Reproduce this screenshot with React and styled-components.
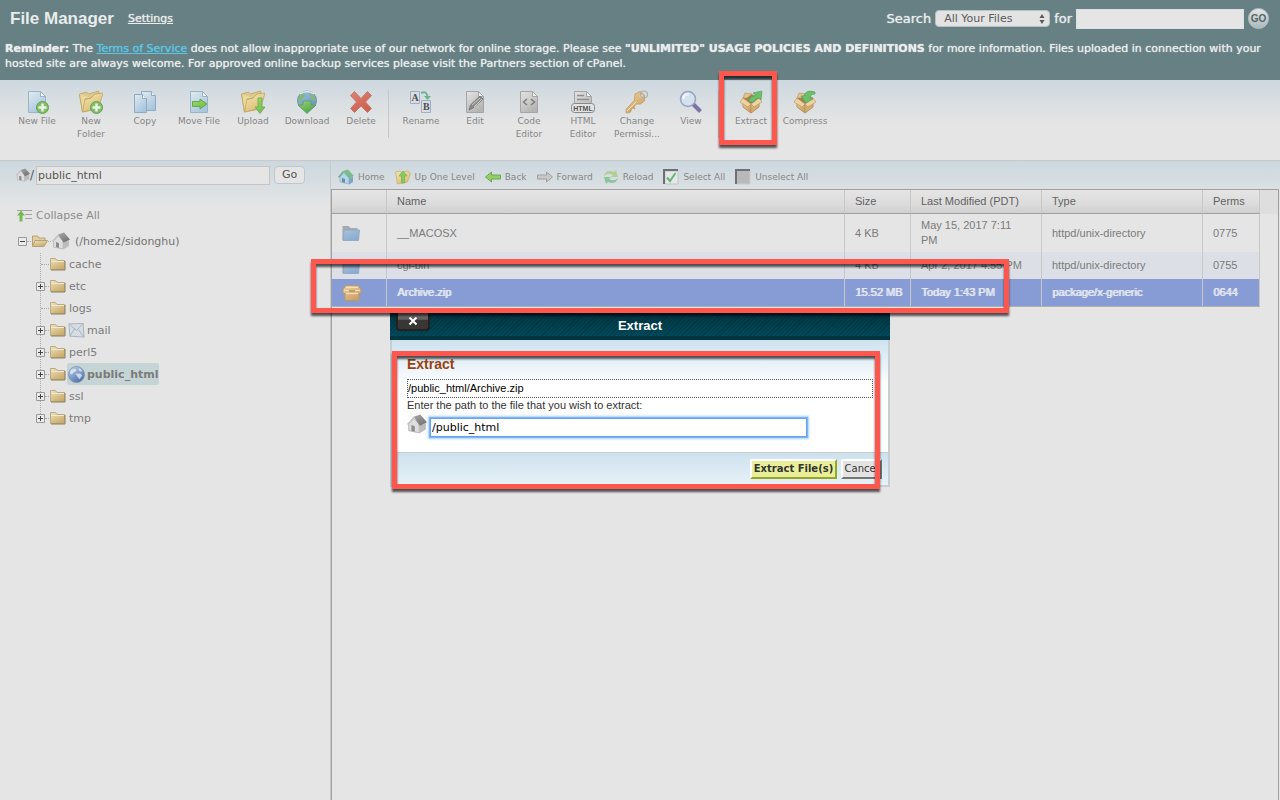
import React from 'react';
import styled, { createGlobalStyle, css } from 'styled-components';

const verdana = '"DejaVu Sans", sans-serif';
const arial = '"Liberation Sans", sans-serif';

const GlobalStyle = createGlobalStyle`
  * { box-sizing: border-box; }
  body { margin: 0; background: #e5e5e5; color: #7b7b7b; font-family: ${verdana}; overflow-x: hidden; }
  button, input, select { font-family: inherit; margin: 0; }
  svg { display: block; flex: none; }
`;

/* ---------- layout ---------- */

const Page = styled.div`
  position: relative;
  display: flex;
  flex-direction: column;
  min-height: 100vh;
`;

const Header = styled.header`
  height: 80px;
  padding-top: 8px;
  background: #678083;
  color: #e8ecec;
  overflow: hidden;
`;

const TopBar = styled.div`
  display: flex;
  align-items: center;
  height: 21px;
  padding: 0 11px 0 10px;
`;

const Title = styled.h1`
  margin: 0 14px 0 0;
  font: bold 17px/20px ${arial};
`;

const SettingsLink = styled.a`
  margin-right: auto;
  color: inherit;
  font-size: 11px;
  line-height: 20px;
  text-shadow: 0 0 1px currentColor;
`;

const SearchForm = styled.form`
  display: flex;
  align-items: center;
  gap: 4px;
  font-size: 13px;
`;

const SearchLabel = styled.label`
  text-shadow: 0 0 1px currentColor;
`;

const SelectBox = styled.span`
  display: flex;
  align-items: center;
  width: 115px;
  height: 17px;
  padding-right: 4px;
  border: 1px solid #b9c2c3;
  border-radius: 4px;
  background: #e3e3e3;
`;

const Scope = styled.select`
  flex: 1;
  min-width: 0;
  height: 15px;
  padding: 0 0 0 8px;
  border: 0;
  appearance: none;
  background: transparent;
  color: #5a5a5a;
  font-size: 11px;
`;

const SearchInput = styled.input`
  width: 168px;
  height: 20px;
  border: 1px solid #dbe2e6;
  background: #e5e5e5;
`;

const GoRound = styled.button`
  width: 21px;
  height: 21px;
  padding: 0;
  border: 1px solid #b8c4c5;
  border-radius: 50%;
  background: linear-gradient(#e3e6e6, #a9b9bc);
  color: #56666a;
  font: bold 10px/19px ${arial};
`;

const Reminder = styled.p`
  margin: 12px 0 0 5px;
  font-size: 11px;
  line-height: 15px;
  white-space: nowrap;
  text-shadow: 0 0 1px currentColor;
  a { color: #5cc5e5; }
`;

const Toolbar = styled.nav`
  display: flex;
  height: 81px;
  padding: 10px 10px 0;
  border-bottom: 1px solid #c9c9c9;
  background: linear-gradient(#cdd8df, #e5e5e5 44px);
`;

const ToolButton = styled.button`
  position: relative;
  display: flex;
  flex-direction: column;
  align-items: center;
  width: 54px;
  height: 51px;
  padding: 0;
  border: 0;
  background: none;
  color: #868686;
  font-size: 9px;
  line-height: 13px;
  > svg { margin-bottom: 1px; }
`;

const ToolDivider = styled.span`
  width: 6px;
  height: 48px;
  border-left: 1px solid #c4c8ca;
`;

const Workspace = styled.div`
  flex: 1;
  display: flex;
`;

const fade = css`background: linear-gradient(#ccd8df, #e5e5e5 46px);`;

const Sidebar = styled.aside`
  width: 331px;
  flex: none;
  border-right: 1px solid #c9c9c9;
  ${fade}
`;

const PathForm = styled.form`
  display: flex;
  align-items: center;
  height: 28px;
  padding-left: 16px;
  font-size: 12px;
  color: #555;
`;

const PathInput = styled.input`
  width: 234px;
  height: 19px;
  margin: 0 4px 0 2px;
  padding: 0 1px;
  border: 1px solid #c4c4c4;
  background: #e5e5e5;
  color: #555;
  font-size: 11px;
`;

const GoButton = styled.button`
  width: 31px;
  height: 18px;
  padding: 0;
  border: 1px solid #c0c6c9;
  border-radius: 4px;
  background: #e5e5e5;
  color: #555;
  font-size: 11px;
  line-height: 16px;
`;

const CollapseAll = styled.button`
  display: flex;
  align-items: center;
  gap: 4px;
  height: 16px;
  margin: 18px 0 0 17px;
  padding: 0;
  border: 0;
  background: none;
  color: #8c8c8c;
  font-size: 11px;
`;

const RootRow = styled.div`
  display: flex;
  align-items: center;
  height: 22px;
  margin: 7px 0 1px 18px;
  font-size: 11px;
  color: #737373;
`;

const RootName = styled.span`
  margin-left: 5px;
`;

const TreeList = styled.ul`
  margin: 0 0 0 36px;
  padding: 0;
  list-style: none;
  font-size: 11px;
  color: #7b7b7b;
  background: repeating-linear-gradient(#aaa 0 1px, transparent 1px 2px) 4px 0 / 1px 166px no-repeat;
`;

const TreeItem = styled.li`
  display: flex;
  align-items: center;
  height: 22px;
`;

const Toggle = styled.button`
  display: block;
  width: 9px;
  height: 9px;
  padding: 0;
  border: 0;
  background: #e5e5e5;
`;

const Dots = styled.span`
  width: ${p => p.$width}px;
  margin: 0 1px 0 ${p => p.$indent || 0}px;
  border-top: 1px dotted #aaa;
`;

const TreeLabel = styled.span`
  display: flex;
  align-items: center;
  gap: 2px;
  height: 22px;
  margin-left: ${p => p.$withIcon ? 1 : 2}px;
  padding: 0 1px;
  border-radius: 2px;
  ${p => p.$selected && css`background: #c5d5d5; font-weight: bold;`}
`;

const Content = styled.main`
  flex: 1;
  min-width: 0;
  display: flex;
  flex-direction: column;
  ${fade}
`;

const NavBar = styled.nav`
  display: flex;
  align-items: center;
  gap: 10px;
  height: 28px;
  padding: 4px 0 0 7px;
`;

const NavButton = styled.button`
  display: flex;
  align-items: center;
  gap: 4px;
  padding: 0;
  border: 0;
  background: none;
  color: #868686;
  font-size: 9px;
`;

const ListFrame = styled.section`
  position: relative;
  flex: 1;
  margin-right: 1px;
  border: solid #a0a0a0;
  border-width: 1px 1px 0;
  background: linear-gradient(#dedede, #dedede) 0 0 / 100% 24px no-repeat #e5e5e5;
`;

const TableArea = styled.div`
  margin-right: 18px;
`;

const Table = styled.table`
  width: 100%;
  border-collapse: separate;
  border-spacing: 0;
  border-bottom: 1px solid #b0b0b0;
  table-layout: fixed;
  text-align: left;
  font: 11px/15px ${arial};
  th, td { padding: 0 6px 0 10px; border-right: 1px solid #c8c8c8; }
  td:nth-child(4) { padding-right: 16px; }
  th {
    height: 24px;
    border-bottom: 1px solid #a0a0a0;
    background: linear-gradient(#e5e5e5, #dcdcdc 60%, #d0d0d0);
    color: #626262;
    font-weight: normal;
  }
`;

const FileRow = styled.tr`
  height: ${p => p.$tall ? 38 : 27}px;
  color: #7b7b7b;
  ${p => p.$striped && css`background: #dce0e6;`}
  ${p => p.$selected && css`background: #879cd4; color: #e5e8f2; text-shadow: 1px 0 0 currentColor;`}
`;

/* ---------- dialog ---------- */

const Dialog = styled.section`
  position: absolute;
  z-index: 10;
  top: 310px;
  left: 50%;
  width: 500px;
  margin-left: -250px;
  color: #333;
`;

const DialogTitle = styled.header`
  display: grid;
  grid-template-columns: 34px 1fr 34px;
  height: 30px;
  padding: 3px 6px 0;
  border-bottom: 4px solid #003540;
  background: repeating-linear-gradient(135deg, transparent 0 2px, rgba(0, 20, 30, 0.2) 2px 3px), linear-gradient(#00323d, #004a5b);
  h2 { margin: 0; color: #fff; font: bold 13px/25px ${arial}; text-align: center; }
`;

const CloseButton = styled.button`
  height: 18px;
  padding: 0;
  border: 2px solid #242021;
  border-top: 0;
  border-radius: 0 0 4px 4px;
  background: linear-gradient(#8c8a8a, #5e5b5b 40%, #3b3636 45%, #3b3636);
  color: #fff;
  svg { margin: auto; }
`;

const DialogBody = styled.div`
  height: 147px;
  border: 2px solid #c8cdd0;
  border-top: 0;
  background: linear-gradient(#cde2ee, #fff 45px);
  font: 11px/14px ${arial};
`;

const DialogContent = styled.div`
  height: 112px;
  padding: 15px 15px 0;
  h3 { margin: 0 0 6px; color: #99420f; font: bold 14px/18px ${arial}; }
`;

const FilePath = styled.div`
  height: 19px;
  border: 1px dotted #555;
  color: #000;
  line-height: 16px;
`;

const PathLabel = styled.label`
  display: block;
  height: 16px;
`;

const InputLine = styled.div`
  display: flex;
  gap: 3px;
`;

const ExtractInput = styled.input`
  width: 377px;
  height: 19px;
  margin-top: 4px;
  padding: 0 1px;
  border: 1px solid #65a5ee;
  outline: none;
  box-shadow: 0 0 0 1px #7db5f2, 0 0 2px 2px #a9cff7;
  background: #fff;
  color: #000;
  font-size: 11px;
  font-family: ${verdana};
`;

const DialogFooter = styled.footer`
  display: flex;
  justify-content: flex-end;
  gap: 4px;
  height: 33px;
  padding: 6px 6px 0 0;
  border-top: 1px solid #c8cdd0;
  background: linear-gradient(#cde2ee, #e8f2f7);
`;

const FooterButton = styled.button`
  width: ${p => p.$primary ? 87 : 41}px;
  height: 20px;
  padding: 0;
  border: 2px solid;
  border-color: ${p => p.$primary ? '#fff #98a52b #98a52b #fff' : '#fff #777 #777 #fff'};
  background: ${p => p.$primary ? '#e9ef99' : '#e3e3e3'};
  color: #333;
  font: ${p => p.$primary ? 'bold' : 'normal'} 10px/16px ${verdana};
  white-space: nowrap;
`;

const Marker = styled.span`
  position: absolute;
  z-index: 20;
  border: 5px solid #ff564e;
  filter: drop-shadow(0 3px 1px rgba(0, 0, 0, 0.65));
  pointer-events: none;
`;

const ToolMarker = styled(Marker)`
  top: -19px;
  left: -5px;
  width: 58px;
  height: 74px;
`;

const RowMarker = styled(Marker)`
  top: 69px;
  left: -21px;
  width: 698px;
  height: 54px;
`;

const FormMarker = styled(Marker)`
  top: 41px;
  left: 2px;
  width: 488px;
  height: 138px;
`;

/* ---------- icons ---------- */

const Svg = ({ w = 24, h = w, box, children }) => (
  <svg width={w} height={h} viewBox={box || `0 0 ${w} ${h}`} aria-hidden="true">{children}</svg>
);

const HiddenSvg = styled.svg`
  position: absolute;
`;

const Gradients = () => (
  <HiddenSvg width="0" height="0" aria-hidden="true">
    <defs>
      {[
        ['paper', '#e2ebf0', '#a8c6de'], ['grayPaper', '#e4e4e4', '#b4b4b4'], ['gold', '#f2e8b8', '#dcbc70'],
        ['green', '#9ad070', '#4fa552'], ['lime', '#a3dc68', '#74bb4d'], ['red', '#dc8178', '#d05f4d'],
        ['blue', '#a3c6e4', '#6394c4'], ['box', '#eed2a0', '#cda068'], ['tan', '#ece3c2', '#ccac6c'],
        ['folderBlue', '#a9c2dc', '#8aabcf'], ['orb', '#c3d5ec', '#5474ae'], ['roof', '#a8a8a8', '#747474'],
      ].map(([id, a, b]) => (
        <linearGradient key={id} id={id} x1="0" y1="0" x2="0.6" y2="1">
          <stop stopColor={a} /><stop offset="1" stopColor={b} />
        </linearGradient>
      ))}
    </defs>
  </HiddenSvg>
);

const Sheet = ({ fill = 'url(#paper)', stroke = '#9ab3c6' }) => (
  <g fill={fill} stroke={stroke}>
    <path d="M3.500 1.500h12l5 5v16h-17z" />
    <path d="M15.500 1.500v5h5z" fill="#eef2f4" />
  </g>
);
const Plus = () => (
  <g><circle cx="17.500" cy="17.500" r="6" fill="#84bd68" stroke="#5fa352" />
    <path d="M17.500 13.500v8M13.500 17.500h8" stroke="#ecf4e8" strokeWidth="2.400" /></g>
);
const OpenFolder = () => (
  <g stroke="#c0a260" strokeWidth=".8" strokeLinejoin="round">
    <path d="M.5 4l7-2 2 2 10-3 1 4-2 14-15 3z" fill="#dcc98b" />
    <path d="M4 10l8-2 4-4 8-1-4.500 15L3.500 22z" fill="url(#gold)" />
    <path d="M.5 4l3 18L6 9l6-1" fill="#ead99c" />
  </g>
);
const Box = () => (
  <g stroke="#b98e58" strokeWidth=".6" strokeLinejoin="round">
    <path d="M4 8l8-4 8 4v9l-8 6-8-6z" fill="#a67f4a" />
    <path d="M4 9l8 5v9l-8-6z" fill="url(#box)" />
    <path d="M20 9l-8 5v9l8-6z" fill="#d6ad71" />
    <path d="M4 8l-3 4 8 5 3-3zM20 8l3 4-8 5-3-3z" fill="#eed3a2" />
    <path d="M4 8L6 3l7 1-5 4z" fill="#e3c38e" />
  </g>
);

const toolIcons = {
  newFile: <Svg><Sheet /><Plus /></Svg>,
  newFolder: <Svg><OpenFolder /><Plus /></Svg>,
  copy: (
    <Svg><g fill="url(#paper)" stroke="#8fabc3">
      <path d="M8.500 1.500h10l4 4v15h-14z" /><path d="M18.500 1.500v4h4" fill="#f0f4f6" />
      <path d="M1.500 4.500h8l4 4v14h-12z" /><path d="M9.500 4.500v4h4" fill="#f0f4f6" />
    </g></Svg>
  ),
  moveFile: <Svg><Sheet /><path d="M5.500 11.500H13V9l7 5-7 5v-2.500H5.500z" fill="url(#lime)" stroke="#63a94f" /></Svg>,
  upload: <Svg><OpenFolder /><path d="M17 8h4v9h3l-5 6.500-5-6.500h3z" fill="url(#lime)" stroke="#68aa50" strokeWidth=".8" /></Svg>,
  download: (
    <Svg><circle cx="12" cy="10.500" r="9.500" fill="url(#blue)" stroke="#7090ac" />
      <path d="M4 5l5-2 2 3-3 2-2 4-3-1zM14 3l5 2 2 6-4-1-2-3z" fill="#86b57f" />
      <path d="M5 4q7-5 14 0" stroke="#dce9f3" strokeWidth="1.500" fill="none" />
      <path d="M8 11h8v4h5l-9 8.500L3 15h5z" fill="url(#green)" stroke="#639b62" strokeWidth=".8" /></Svg>
  ),
  delete: <Svg><path d="M5.500 1.500l6.500 7 6.500-7 4 4-6 6.500 6 6.500-4 4-6.500-6.500-6.500 6.500-4-4 6-6.500-6-6.500z" fill="url(#red)" stroke="#c17c72" /></Svg>,
  rename: (
    <Svg><g fill="#d7dde5" stroke="#a2afbf"><path d="M1.500 1.500h9v12h-9z" /><path d="M12.500 10.500h9v12h-9z" /></g>
      <g fill="#505050" fontFamily="Liberation Serif, serif" fontWeight="bold" fontSize="10"><text x="2.500" y="11">A</text><text x="14" y="20">B</text></g>
      <path d="M12 3q6-2.500 6.500 4" stroke="#6bb58c" strokeWidth="2" fill="none" /><path d="M15 6h7l-3.500 4z" fill="#6bb58c" /></Svg>
  ),
  edit: (
    <Svg><Sheet fill="url(#grayPaper)" stroke="#a5a5a5" />
      <path d="M6 20l1.500-5L17 6l3 3-10 9z" fill="#8b8b8b" stroke="#707070" strokeWidth=".8" /><path d="M9 15l8-7M11 17l8-8" stroke="#ccc" /></Svg>
  ),
  code: (
    <Svg><Sheet fill="url(#grayPaper)" stroke="#a5a5a5" />
      <path d="M10 9l-3.500 3 3.500 3M14 9l3.500 3-3.500 3" stroke="#7e7e7e" strokeWidth="1.500" fill="none" /></Svg>
  ),
  html: (
    <Svg><Sheet fill="url(#grayPaper)" stroke="#a5a5a5" />
      <path d="M6 5.500h7M6 9.500h12" stroke="#909090" strokeWidth="1.500" />
      <rect x=".5" y="13.500" width="23" height="9" rx="3" fill="#e4e4e4" stroke="#888" />
      <text x="12" y="20.500" fill="#555" fontFamily="Liberation Sans, sans-serif" fontWeight="bold" fontSize="7" textAnchor="middle">HTML</text></Svg>
  ),
  key: (
    <Svg><path d="M10 4l5-2.500 4.500 3.500v6l-4 3h-4L6 20l-1 2.500-4 .5v-3.500L9.500 10z" fill="url(#box)" stroke="#c39d5b" strokeWidth=".8" />
      <circle cx="16" cy="6" r="1.500" fill="#dfe3e4" /><circle cx="19" cy="4.500" r="3.500" fill="none" stroke="#adadad" strokeWidth="1.200" />
      <path d="M2 21l9-9" stroke="#f3dfb5" /><path d="M6 20l-1 2M8 17l2 2" stroke="#c39d5b" strokeWidth="1.500" /></Svg>
  ),
  view: (
    <Svg><path d="M14 14l7.500 7.500" stroke="#7d74a6" strokeWidth="4" />
      <circle cx="9" cy="9" r="7.500" fill="#d4e1ee" stroke="#97a3c2" strokeWidth="1.500" />
      <path d="M4 9q1-5 6-5" stroke="#f3f7fa" strokeWidth="2" fill="none" /></Svg>
  ),
  extract: <Svg><Box /><path d="M10 12q0-6 6-6V4l-2-1 9-2-1 9-2-2q-4 0-5 4z" fill="#6cc069" stroke="#54a259" strokeWidth=".7" /></Svg>,
  compress: <Svg><Box /><path d="M22 2q-9-3-11 4H8l5 7 7-4-3-1q0-4 5-4z" fill="#6cc069" stroke="#54a259" strokeWidth=".7" /></Svg>,
};

const House = ({ size = 18 }) => (
  <Svg w={size} box="0 0 18 18">
    <path d="M1.500 9L6 4l5 5v8l-9.500-2z" fill="#dedede" stroke="#a5a5a5" strokeWidth=".6" />
    <path d="M11 9l6-1v6l-6 3.500z" fill="#bcbcbc" />
    <path d="M6 2.500L12 .5l6 7-6.500 3z" fill="url(#roof)" /><path d="M0 9l6-6.500 1 1L1 10z" fill="#c2c2c2" />
    <path d="M4 10l3 1v5l-3-1z" fill="#8c8c8c" />
  </Svg>
);
const ColorHouse = () => (
  <Svg w={16}>
    <path d="M2 8l4-4 5 5v6l-9-2z" fill="#b5d5e8" stroke="#8fabbb" strokeWidth=".6" />
    <path d="M11 9l4-1v5l-4 2.500z" fill="#7ba6c8" />
    <path d="M5 2l5-1.500 6 6.500-5 2.500z" fill="#78bd8b" /><path d="M0 8l5-6 1 1-5 6z" fill="#6bae85" />
    <path d="M4 9l3 1v4l-3-1z" fill="#6c8eab" />
  </Svg>
);
const Folder = () => (
  <Svg w={16} h={14}><path d="M.5 1.500h5l1.500 2h7.500v9H.5z" fill="url(#tan)" stroke="#bcab7f" />
    <path d="M1 4.500h13" stroke="#f1ead0" /><path d="M15 4v9H1" stroke="#8b805f" fill="none" /></Svg>
);
const FolderOpen = () => (
  <Svg w={16} h={14}><path d="M.5 12V2h5l1.500 2h6v3" fill="#e0cfa0" stroke="#b5a274" />
    <path d="M3 6.500h12.500L12 12.500H.5z" fill="url(#tan)" stroke="#b5a274" /></Svg>
);
const Mail = () => (
  <Svg w={17} box="0 0 18 18"><path d="M1 2l15-.5 1 14.500-15-1z" fill="#d6dde4" stroke="#a5b3bf" />
    <path d="M1 2l8 7 7-7.500M2 15l5-8M17 16l-6-8" fill="none" stroke="#a5b3bf" /></Svg>
);
const Globe = () => (
  <Svg w={17} box="0 0 18 18"><circle cx="9" cy="9" r="8.500" fill="url(#orb)" stroke="#7a8fb6" strokeWidth=".8" />
    <path d="M3 4l5-1 1 2-3 2-2 2-2-1zM8 8l5 0 2 2-3 4-2-3zM12 2l3 3-2 1-2-2z" fill="#eaf0f6" opacity=".75" /></Svg>
);
const Sign = ({ open }) => (
  <Svg w={9}><path d="M.5.5h8v8h-8z" fill="#ebebeb" stroke="#999" /><path d={open ? 'M2 4.500h5' : 'M2 4.500h5M4.500 2v5'} stroke="#444" /></Svg>
);
const CollapseIcon = () => (
  <Svg w={15} h={13}><path d="M0 1.500h15M8 5.500h7M8 9.500h7" stroke="#a3a3a3" /><path d="M4 1.500l4 5H5.500v6h-3v-6H0z" fill="#79b757" /></Svg>
);
const BlueFolder = () => (
  <Svg w={18} h={16}><path d="M.5 1h6l2 2h7v12H.5z" fill="#a8abae" /><path d="M2 5h15.500L16.500 15.500H1z" fill="url(#folderBlue)" stroke="#8aa5c4" strokeWidth=".8" /></Svg>
);
const ZipIcon = () => (
  <Svg w={20} h={16}><path d="M4 .5h12l3 4v4h-2v7H3v-7H1v-4z" fill="url(#box)" stroke="#b99a68" />
    <path d="M4 2.500h12M2 5.500h16M4 8.500h12" stroke="#f1e2be" /><path d="M7 5h6v2H7z" fill="#c29c66" /></Svg>
);
const ArrowShape = ({ right, fill, stroke }) => (
  <Svg w={16} h={12}><path d={right ? 'M15.500 6l-6-5v3h-9v4h9v3z' : 'M.5 6l6-5v3h9v4h-9v3z'} fill={fill} stroke={stroke} /></Svg>
);
const navIcons = {
  home: <ColorHouse />,
  up: <Svg w={16}><path d="M.5 3l5-1 1 1.500 6-1.500 3 2-3 9-10 2z" fill="url(#gold)" stroke="#c8b070" strokeWidth=".8" /><path d="M8 2l4 5H9.500v7h-3V7H4z" fill="#8acb5e" stroke="#70ad54" strokeWidth=".7" /></Svg>,
  back: <ArrowShape fill="#93cf64" stroke="#6aa852" />,
  forward: <ArrowShape right fill="#c8c8c8" stroke="#9f9f9f" />,
  reload: <Svg w={16}><path d="M1 7Q3 0 11 3l2-2 2 7H8l2-2Q5 3 1 7z" fill="#b4ce91" /><path d="M15 9q-2 7-10 4l-2 2-2-7h7l-2 2q5 3 9-1z" fill="#8ac69a" /></Svg>,
  select: <Svg w={16}><path d="M2 2h13v13H2z" fill="#e7e7e7" stroke="#b9c5ca" /><path d="M1 15V1H15" fill="none" stroke="#6f6f78" strokeWidth="2" /><path d="M4 8.500l3 3.500L12.500 4" fill="none" stroke="#62b678" strokeWidth="2" /></Svg>,
  unselect: <Svg w={16}><path d="M1 1h14v14H1z" fill="#b9b9b9" stroke="#c5cdd2" /><path d="M1 15V1H15" fill="none" stroke="#6f6f78" strokeWidth="2" /></Svg>,
};

/* ---------- data ---------- */

const toolGroups = [
  [['newFile', 'New File'], ['newFolder', 'New', 'Folder'], ['copy', 'Copy'], ['moveFile', 'Move File'], ['upload', 'Upload'], ['download', 'Download'], ['delete', 'Delete']],
  [['rename', 'Rename'], ['edit', 'Edit'], ['code', 'Code', 'Editor'], ['html', 'HTML', 'Editor'], ['key', 'Change', 'Permissi...'], ['view', 'View']],
  [['extract', 'Extract'], ['compress', 'Compress']],
];

const tree = [
  { name: 'cache', leaf: true }, { name: 'etc' }, { name: 'logs', leaf: true }, { name: 'mail', icon: <Mail /> },
  { name: 'perl5' }, { name: 'public_html', icon: <Globe />, selected: true }, { name: 'ssl' }, { name: 'tmp' },
];

const navItems = [
  ['home', 'Home'], ['up', 'Up One Level'], ['back', 'Back'], ['forward', 'Forward'],
  ['reload', 'Reload'], ['select', 'Select All'], ['unselect', 'Unselect All'],
];

const files = [
  { name: '__MACOSX', size: '4 KB', date: 'May 15, 2017 7:11 PM', type: 'httpd/unix-directory', perms: '0775', tall: true },
  { name: 'cgi-bin', size: '4 KB', date: 'Apr 2, 2017 4:55 PM', type: 'httpd/unix-directory', perms: '0755', striped: true },
  { name: 'Archive.zip', size: '15.52 MB', date: 'Today 1:43 PM', type: 'package/x-generic', perms: '0644', selected: true },
];

const columnWidths = ['55', undefined, '66', '131', '161', '57'];

export default function App() {
  return (
    <Page>
      <GlobalStyle />
      <Gradients />
      <Header>
        <TopBar>
          <Title>File Manager</Title>
          <SettingsLink href="#settings">Settings</SettingsLink>
          <SearchForm>
            <SearchLabel htmlFor="scope">Search</SearchLabel>
            <SelectBox>
              <Scope id="scope"><option>All Your Files</option></Scope>
              <Svg w={6} h={10}><path d="M3 0l2.500 4h-5zM3 10l2.500-4h-5z" fill="#5a5a5a" /></Svg>
            </SelectBox>
            <SearchLabel htmlFor="query">for</SearchLabel>
            <SearchInput id="query" type="text" />
            <GoRound type="button">GO</GoRound>
          </SearchForm>
        </TopBar>
        <Reminder>
          <strong>Reminder:</strong> The <a href="#terms">Terms of Service</a> does not allow inappropriate use of our network for online storage. Please see <strong>"UNLIMITED" USAGE POLICIES AND DEFINITIONS</strong> for more information. Files uploaded in connection with your<br />
          hosted site are always welcome. For approved online backup services please visit the Partners section of cPanel.
        </Reminder>
      </Header>

      <Toolbar>
        {toolGroups.map((group, g) => (
          <React.Fragment key={g}>
            {g > 0 && <ToolDivider />}
            {group.map(([icon, ...lines]) => (
              <ToolButton key={icon} type="button">
                {toolIcons[icon]}
                {lines.map(line => <span key={line}>{line}</span>)}
                {icon === 'extract' && <ToolMarker />}
              </ToolButton>
            ))}
          </React.Fragment>
        ))}
      </Toolbar>

      <Workspace>
        <Sidebar>
          <PathForm>
            <House size={14} />
            <label htmlFor="path">/</label>
            <PathInput id="path" type="text" defaultValue="public_html" />
            <GoButton type="button">Go</GoButton>
          </PathForm>
          <CollapseAll type="button"><CollapseIcon />Collapse All</CollapseAll>
          <RootRow>
            <Toggle type="button" aria-label="Collapse home"><Sign open /></Toggle>
            <Dots $width={4} />
            <FolderOpen />
            <Dots $width={3} />
            <House />
            <RootName>(/home2/sidonghu)</RootName>
          </RootRow>
          <TreeList>
            {tree.map(item => (
              <TreeItem key={item.name}>
                {item.leaf
                  ? <Dots $width={8} $indent={5} />
                  : <><Toggle type="button" aria-label={`Expand ${item.name}`}><Sign /></Toggle><Dots $width={4} /></>}
                <Folder />
                <TreeLabel $selected={item.selected} $withIcon={Boolean(item.icon)}>{item.icon}{item.name}</TreeLabel>
              </TreeItem>
            ))}
          </TreeList>
        </Sidebar>

        <Content>
          <NavBar>
            {navItems.map(([icon, label]) => (
              <NavButton key={icon} type="button">{navIcons[icon]}{label}</NavButton>
            ))}
          </NavBar>
          <ListFrame>
            <TableArea>
              <Table>
                <colgroup>
                  {columnWidths.map((width, i) => <col key={i} width={width} />)}
                </colgroup>
                <thead>
                  <tr><th /><th>Name</th><th>Size</th><th>Last Modified (PDT)</th><th>Type</th><th>Perms</th></tr>
                </thead>
                <tbody>
                  {files.map(f => (
                    <FileRow key={f.name} $tall={f.tall} $striped={f.striped} $selected={f.selected}>
                      <td>{f.selected ? <ZipIcon /> : <BlueFolder />}</td>
                      <td>{f.name}</td><td>{f.size}</td><td>{f.date}</td><td>{f.type}</td><td>{f.perms}</td>
                    </FileRow>
                  ))}
                </tbody>
              </Table>
            </TableArea>
            <RowMarker />
          </ListFrame>
        </Content>
      </Workspace>

      <Dialog role="dialog" aria-labelledby="dialog-title">
        <DialogTitle>
          <CloseButton type="button" aria-label="Close">
            <Svg w={10}><path d="M1.500 1.500l7 7M8.500 1.500l-7 7" stroke="#fff" strokeWidth="2" /></Svg>
          </CloseButton>
          <h2 id="dialog-title">Extract</h2>
        </DialogTitle>
        <DialogBody>
          <DialogContent>
            <h3>Extract</h3>
            <FilePath>/public_html/Archive.zip</FilePath>
            <PathLabel htmlFor="target">Enter the path to the file that you wish to extract:</PathLabel>
            <InputLine>
              <House size={20} />
              <ExtractInput id="target" type="text" defaultValue="/public_html" autoFocus />
            </InputLine>
          </DialogContent>
          <DialogFooter>
            <FooterButton type="button" $primary>Extract File(s)</FooterButton>
            <FooterButton type="button">Cancel</FooterButton>
          </DialogFooter>
        </DialogBody>
        <FormMarker />
      </Dialog>
    </Page>
  );
}
